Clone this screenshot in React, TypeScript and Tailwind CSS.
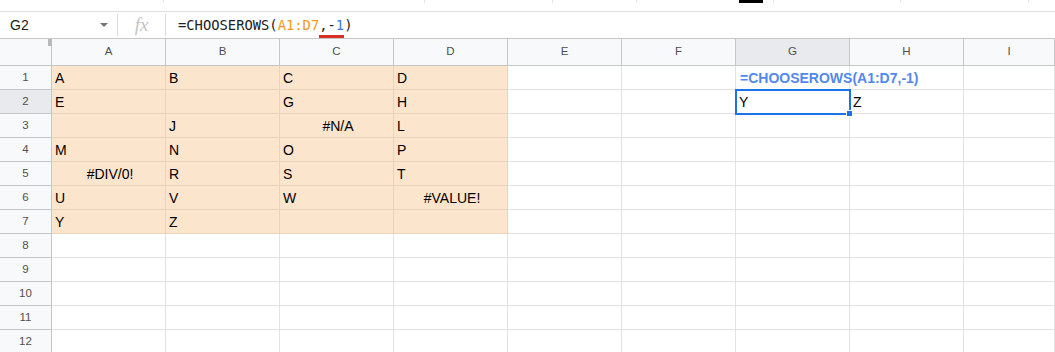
import React from 'react';

type Cell = { v: string; center?: boolean };

const cols = ['A', 'B', 'C', 'D', 'E', 'F', 'G', 'H', 'I'];

const data: Cell[][] = [
  [{ v: 'A' }, { v: 'B' }, { v: 'C' }, { v: 'D' }],
  [{ v: 'E' }, { v: '' }, { v: 'G' }, { v: 'H' }],
  [{ v: '' }, { v: 'J' }, { v: '#N/A', center: true }, { v: 'L' }],
  [{ v: 'M' }, { v: 'N' }, { v: 'O' }, { v: 'P' }],
  [{ v: '#DIV/0!', center: true }, { v: 'R' }, { v: 'S' }, { v: 'T' }],
  [{ v: 'U' }, { v: 'V' }, { v: 'W' }, { v: '#VALUE!', center: true }],
  [{ v: 'Y' }, { v: 'Z' }, { v: '' }, { v: '' }],
];

const ticks = [163, 424, 552, 636, 773, 900, 1028];

function TopStrip() {
  return (
    <div className="relative flex h-[12px] border-b border-[#e0e0e0]">
      {ticks.map((x, i) => (
        <div key={x} className={`h-[3px] w-px bg-[#e3e3e3] ${i === 0 ? 'ml-[163px]' : ''}`} style={i === 0 ? undefined : { marginLeft: x - ticks[i - 1] - 1 }} />
      ))}
      {/* stray toolbar marker */}
      <div className="absolute left-[739px] top-0 h-[3px] w-[24px] bg-black" />
    </div>
  );
}

function FormulaBar() {
  return (
    <div className="flex h-[27px] items-center border-b border-[#c7c7c7] font-['Liberation_Sans',Arial,sans-serif]">
      <div className="flex w-[117px] items-center justify-between pl-[10px] pr-[9px]">
        <span className="text-[14px] text-[#202124]">G2</span>
        <span className="h-0 w-0 border-x-[4px] border-t-[4px] border-x-transparent border-t-[#737373]" />
      </div>
      <div className="h-[22px] w-px bg-[#dadce0]" />
      <div className="flex w-[47px] items-center justify-center font-['Liberation_Serif',serif] text-[19px] italic text-[#c4c4c4]">
        fx
      </div>
      <div className="h-[22px] w-px bg-[#dadce0]" />
      <div className="pl-[12px] font-['DejaVu_Sans_Mono',monospace] text-[13.8px] text-[#202124]">
        =CHOOSEROWS(<span className="text-[#f09a24]">A1:D7</span>
        <span className="border-b-[3px] border-[#d93025] pb-[2px]">
          ,-<span className="text-[#3c78d8]">1</span>
        </span>
        )
      </div>
    </div>
  );
}

function HeaderRow() {
  return (
    <div className="flex h-[27px] border-b border-[#c4c7c5] bg-[#f8f9fa] font-['Liberation_Sans',Arial,sans-serif] text-[11.5px] text-[#505050]">
      <div className="relative w-[52px] shrink-0 border-r border-[#c4c7c5]">
        <div className="absolute right-[-1px] top-0 h-[7px] w-[4px] bg-[#b9b9b9]" />
      </div>
      {cols.map((c) => (
        <div
          key={c}
          className={`flex shrink-0 items-center justify-center border-r border-[#c4c7c5] ${c === 'I' ? 'flex-1' : 'w-[114px]'} ${c === 'G' ? 'bg-[#e8eaed]' : ''}`}
        >
          {c}
        </div>
      ))}
    </div>
  );
}

function Row({ n }: { n: number }) {
  const vals = data[n - 1];
  return (
    <div className="flex h-[24px] font-['Liberation_Sans',Arial,sans-serif]">
      <div
        className={`flex w-[52px] shrink-0 items-center justify-center border-b border-r border-[#c4c7c5] text-[11.5px] text-[#505050] ${n === 2 ? 'bg-[#e8eaed]' : 'bg-[#f8f9fa]'}`}
      >
        {n}
      </div>
      {cols.map((c, ci) => {
        const peach = vals && ci < 4;
        const cell = peach ? vals[ci] : undefined;
        const isSel = c === 'G' && n === 2;
        return (
          <div
            key={c}
            className={`relative flex shrink-0 items-center whitespace-nowrap border-b border-r pl-[3px] pt-[1px] text-[14px] text-black ${c === 'I' ? 'flex-1' : 'w-[114px]'} ${
              peach ? 'border-[#ecd2b8] bg-[#fce5cd]' : 'border-[#e2e2e2]'
            } ${cell?.center ? 'justify-center pl-0' : ''}`}
          >
            {cell?.v}
            {c === 'G' && n === 1 && (
              <span className="relative z-10 pl-[1px] text-[14px] font-bold text-[#5289ec]">=CHOOSEROWS(A1:D7,-1)</span>
            )}
            {isSel && (
              <>
                <span>Y</span>
                <div className="absolute left-[-1px] top-[-1px] z-10 h-[26px] w-[116px] border-2 border-[#1a73e8]" />
                <div className="absolute bottom-[-4px] right-[-4px] z-20 h-[7px] w-[7px] border border-white bg-[#1a73e8]" />
              </>
            )}
            {c === 'H' && n === 2 && <span>Z</span>}
          </div>
        );
      })}
    </div>
  );
}

export default function App() {
  return (
    <div className="h-[352px] w-[1055px] overflow-hidden bg-white">
      <TopStrip />
      <FormulaBar />
      <HeaderRow />
      {Array.from({ length: 12 }, (_, i) => (
        <Row key={i} n={i + 1} />
      ))}
    </div>
  );
}
